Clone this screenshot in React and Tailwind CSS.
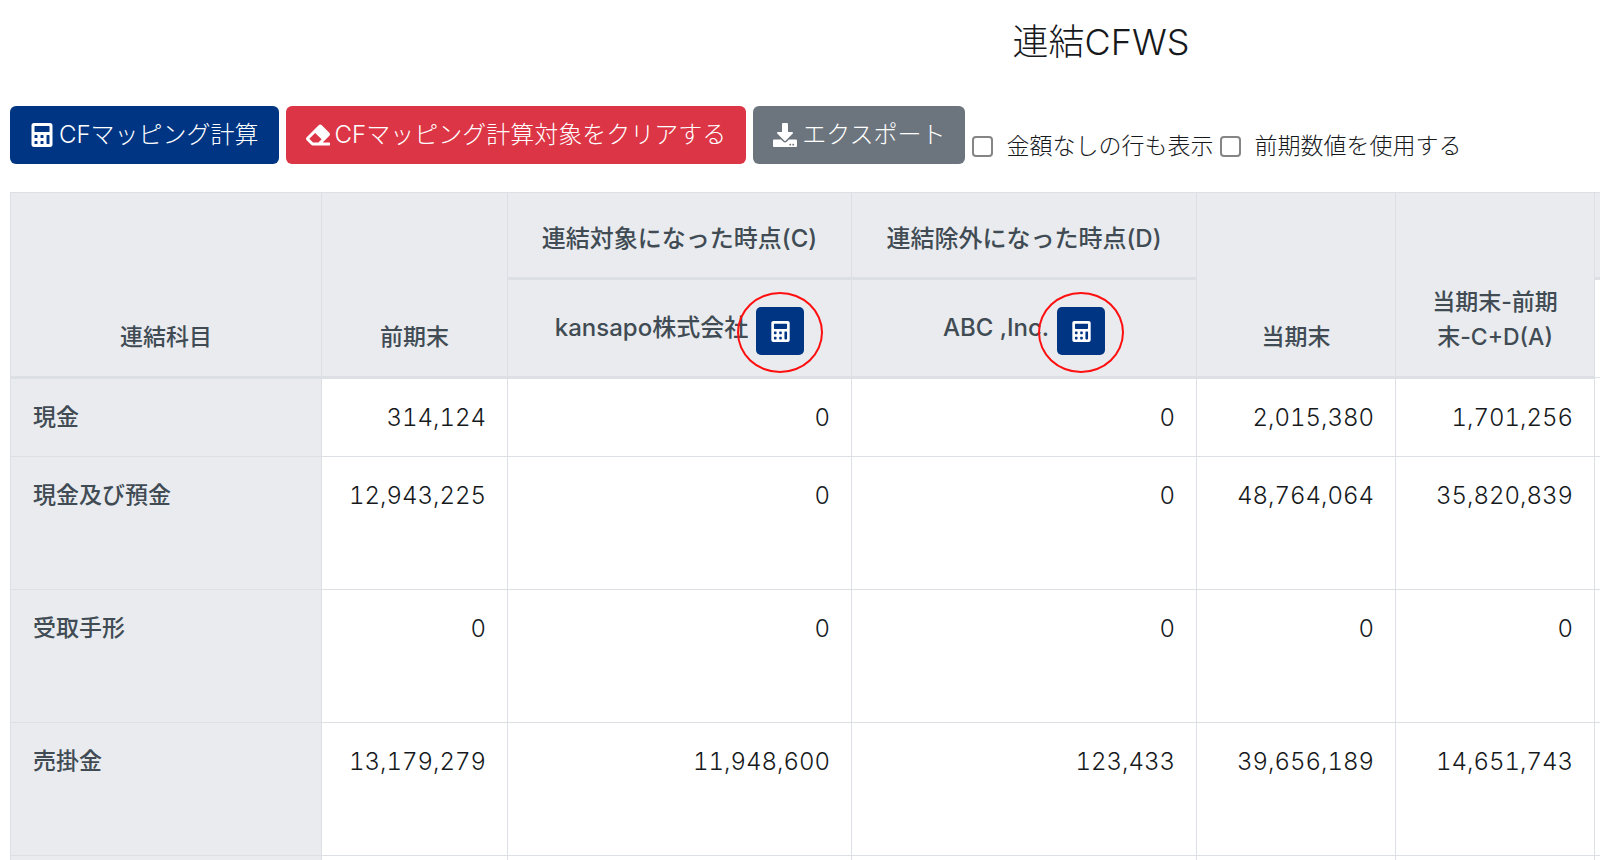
import { useState } from 'react';
import { FaCalculator, FaDownload, FaEraser } from 'react-icons/fa';

const rows = [
  { name: '現金', values: ['314,124', '0', '0', '2,015,380', '1,701,256'], height: 'h-[78px]' },
  { name: '現金及び預金', values: ['12,943,225', '0', '0', '48,764,064', '35,820,839'], height: 'h-[133px]' },
  { name: '受取手形', values: ['0', '0', '0', '0', '0'], height: 'h-[133px]' },
  { name: '売掛金', values: ['13,179,279', '11,948,600', '123,433', '39,656,189', '14,651,743'], height: 'h-[133px]' },
  { name: '', values: ['', '', '', '', ''], height: 'h-[133px]' },
];

const head =
  'border border-b-3 border-[#dce0e5] bg-[#e9ebef] px-[21px] pb-[21px] align-bottom font-medium text-[#414b54]';

function ToolbarButton({ icon: Icon, color, children }) {
  return (
    <button
      type="button"
      className={`flex h-[58px] items-center gap-[5px] rounded-md px-5 text-2xl text-white ${color}`}
    >
      <Icon className="size-6" />
      {children}
    </button>
  );
}

function CheckOption({ id, children }) {
  const [checked, setChecked] = useState(false);
  return (
    <div className="flex items-center">
      <input
        id={id}
        type="checkbox"
        checked={checked}
        onChange={(e) => setChecked(e.target.checked)}
        className="mr-[13px] size-[21px] appearance-none rounded-[4px] border-2 border-[#858585] bg-white checked:border-[#003584] checked:bg-[#003584]"
      />
      <label htmlFor={id}>{children}</label>
    </div>
  );
}

function CompanyHeader({ name }) {
  return (
    <th scope="col" className={`${head} h-[99px]`}>
      <div className="flex items-start justify-center gap-2 text-2xl leading-[42px]">
        <span>{name}</span>
        <button
          type="button"
          aria-label={name}
          className="relative flex size-12 items-center justify-center rounded-[5px] bg-[#003584] text-white"
        >
          <FaCalculator className="size-[21px]" />
          <span className="absolute -inset-x-[19px] -top-[15px] -bottom-[18px] rounded-[50%] border-2 border-[#ff1010]" />
        </button>
      </div>
    </th>
  );
}

export default function App() {
  return (
    <div className="h-screen overflow-hidden bg-white font-['Inter','Noto_Sans_CJK_JP',sans-serif] text-[23px] leading-[35px] font-light text-[#16191c]">
      <div className="w-max pl-[10px]">
        <h1 className="pt-[21px] pr-[10px] text-center text-4xl leading-[42px]">連結CFWS</h1>

        <div className="mt-[43px] flex items-end gap-[7px]">
          <ToolbarButton icon={FaCalculator} color="bg-[#003584]">CFマッピング計算</ToolbarButton>
          <ToolbarButton icon={FaEraser} color="bg-[#dc3545]">CFマッピング計算対象をクリアする</ToolbarButton>
          <ToolbarButton icon={FaDownload} color="bg-[#6c757d]">エクスポート</ToolbarButton>
          <CheckOption id="show-empty">金額なしの行も表示</CheckOption>
          <CheckOption id="use-previous">前期数値を使用する</CheckOption>
        </div>

        <table className="mt-7 w-[2192px] table-fixed border-collapse">
          <colgroup>
            <col className="w-[311px]" />
            <col className="w-[186px]" />
            <col className="w-[344px]" />
            <col className="w-[345px]" />
            <col className="w-[199px]" />
            <col className="w-[199px]" />
            <col />
          </colgroup>
          <thead>
            <tr>
              <th scope="col" rowSpan={2} className={head}>連結科目</th>
              <th scope="col" rowSpan={2} className={head}>前期末</th>
              <th scope="col" className={`${head} h-[86px] text-2xl leading-[35px]`}>連結対象になった時点(C)</th>
              <th scope="col" className={`${head} h-[86px] text-2xl leading-[35px]`}>連結除外になった時点(D)</th>
              <th scope="col" rowSpan={2} className={head}>当期末</th>
              <th scope="col" rowSpan={2} className={head}>当期末-前期末-C+D(A)</th>
              <td className={head} />
            </tr>
            <tr>
              <CompanyHeader name="kansapo株式会社" />
              <CompanyHeader name="ABC ,Inc." />
              <td className="border border-[#dce0e5]" />
            </tr>
          </thead>
          <tbody>
            {rows.map((row, i) => (
              <tr key={i} className={row.height}>
                <th
                  scope="row"
                  className="border border-[#dce0e5] bg-[#e9ebef] px-[22px] py-[21px] text-left align-top font-medium text-[#414b54]"
                >
                  {row.name}
                </th>
                {row.values.map((value, j) => (
                  <td
                    key={j}
                    className="border border-[#dce0e5] px-[21px] py-[21px] text-right align-top text-2xl leading-[35px] tabular-nums"
                  >
                    {value}
                  </td>
                ))}
                <td className="border border-[#dce0e5]" />
              </tr>
            ))}
          </tbody>
        </table>
      </div>
    </div>
  );
}
